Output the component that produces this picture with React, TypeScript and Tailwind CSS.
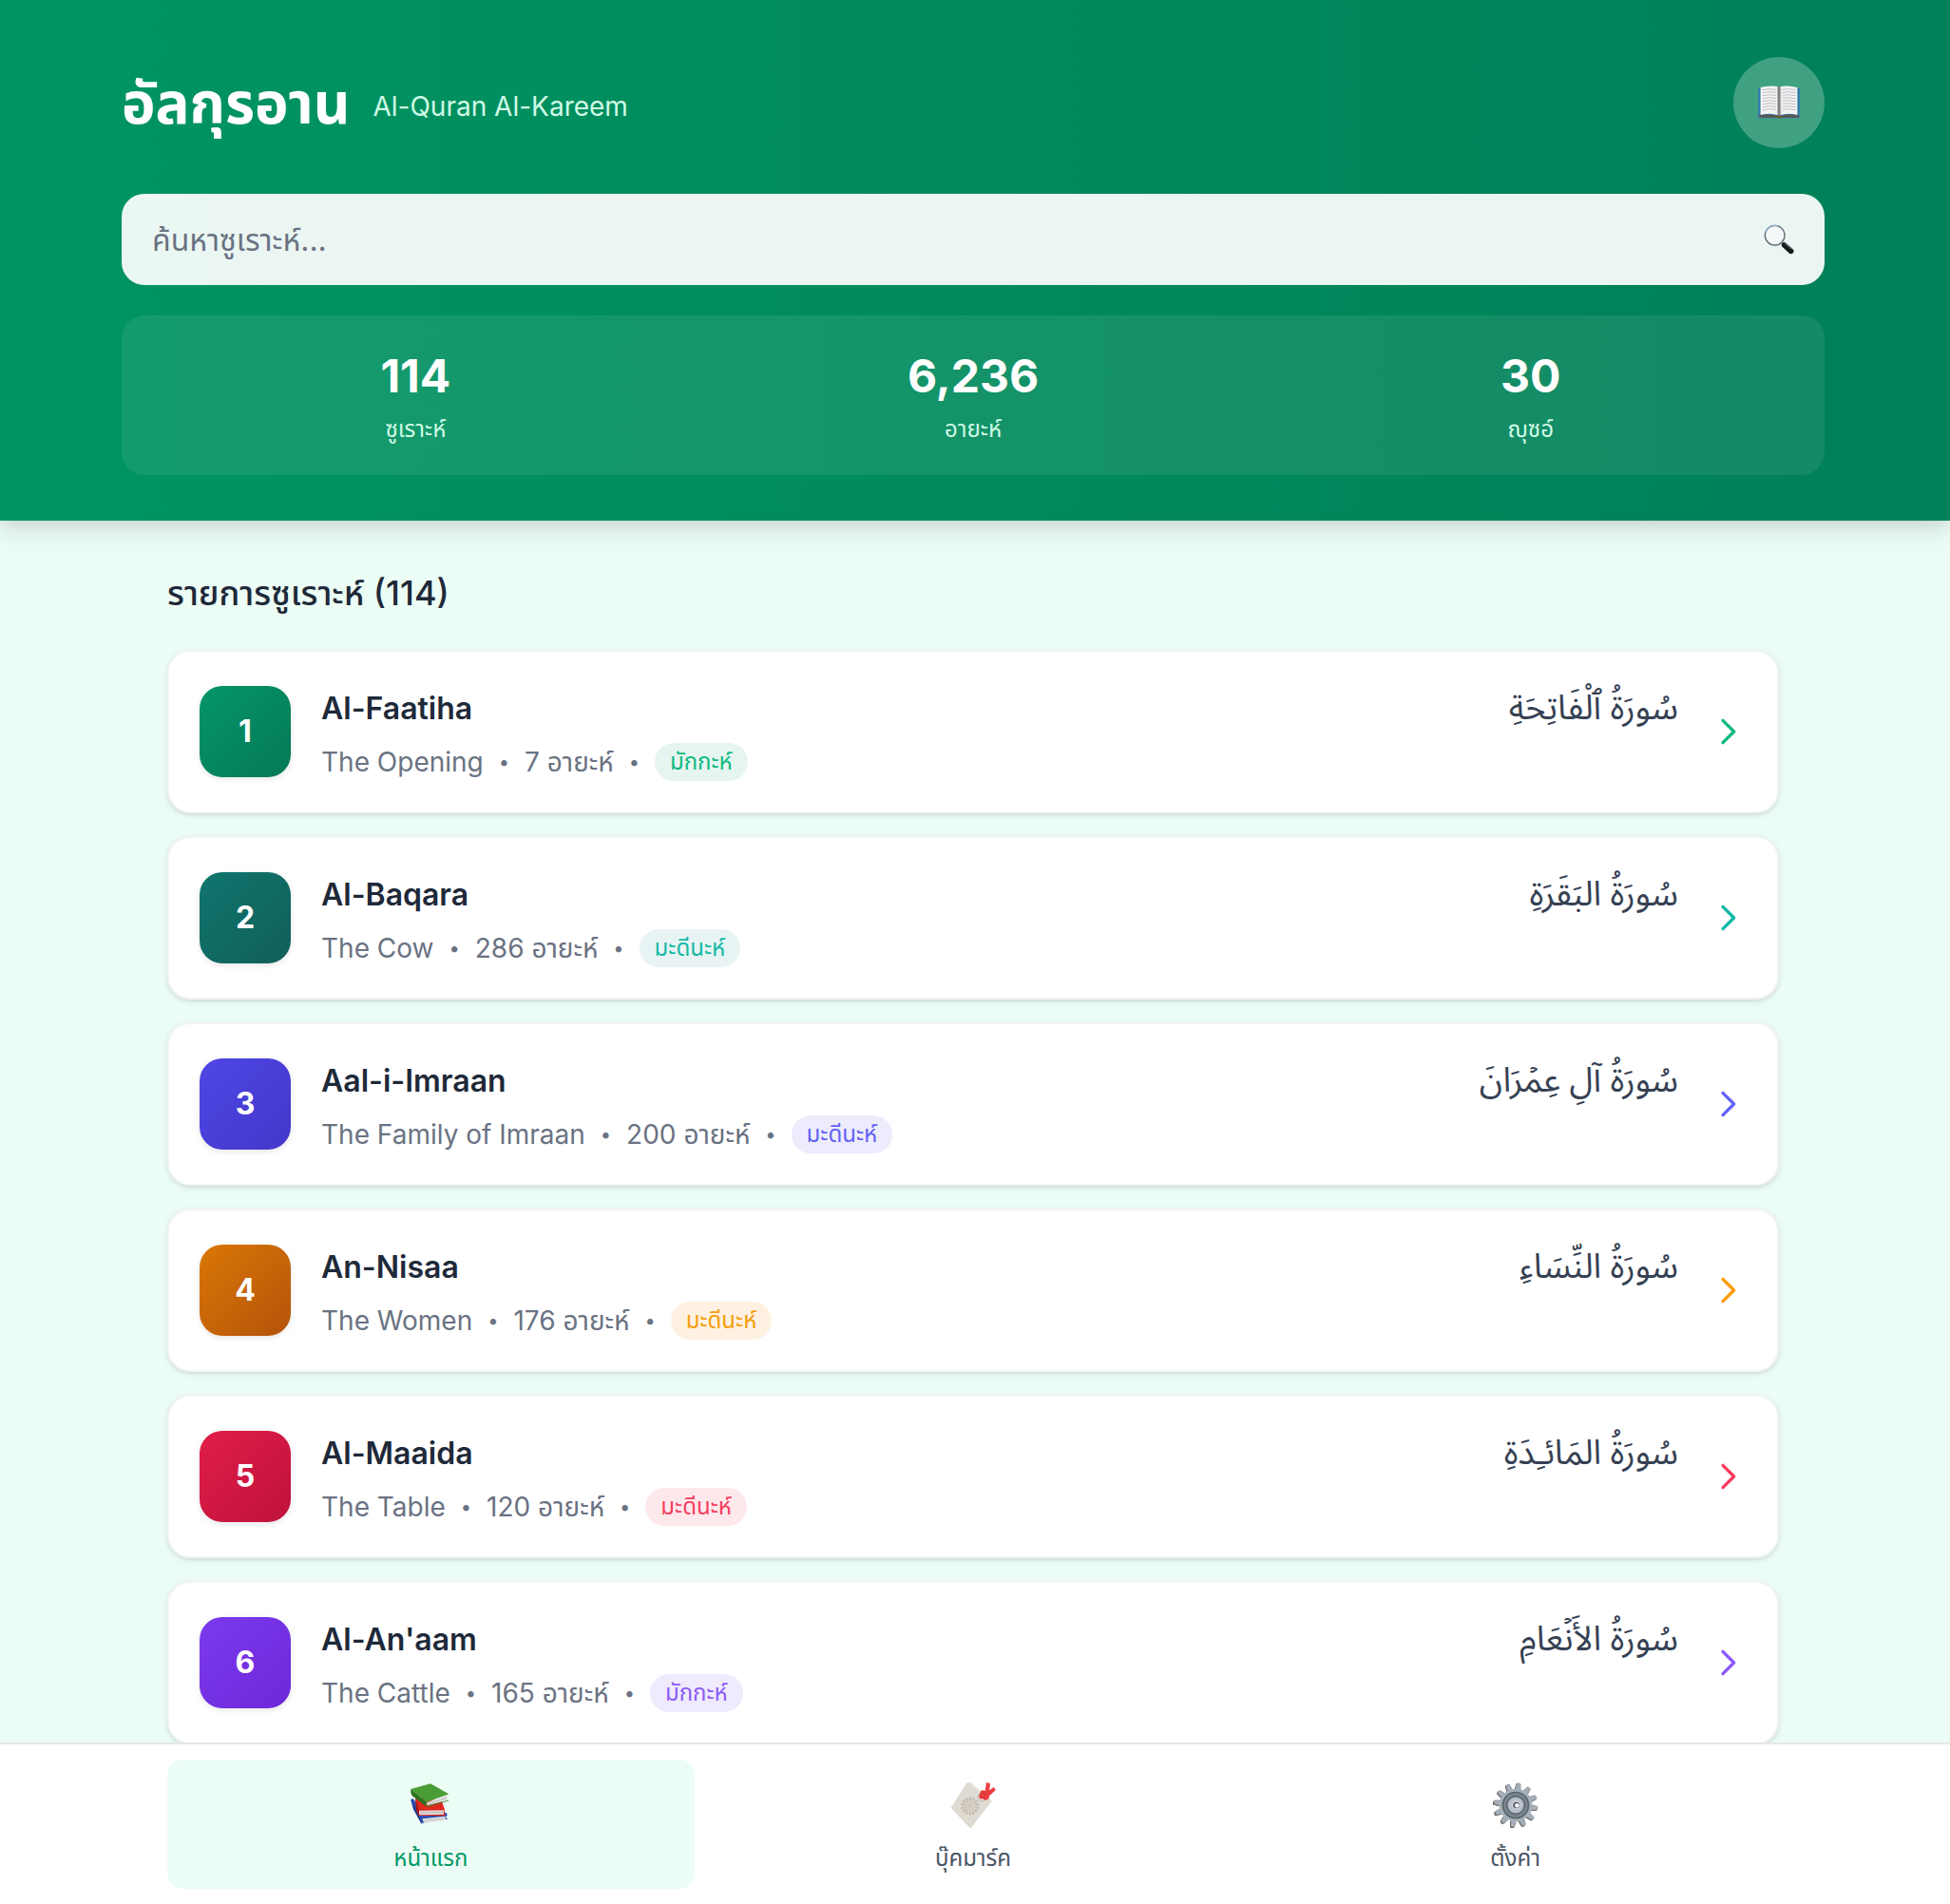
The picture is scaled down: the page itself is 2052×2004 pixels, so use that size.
import React from "react";

type Surah = {
  no: number;
  name: string;
  meaning: string;
  ayahs: number;
  place: string;
  arabic: string;
  tile: string;
  badge: string;
  arrow: string;
};

const MAKKI = "มักกะห์";
const MADANI = "มะดีนะห์";

const surahs: Surah[] = [
  { no: 1, name: "Al-Faatiha", meaning: "The Opening", ayahs: 7, place: MAKKI, arabic: "سُورَةُ ٱلْفَاتِحَةِ", tile: "from-[#059669] to-[#047857]", badge: "bg-[#e6f5f0] text-[#10b981]", arrow: "text-[#0fb981]" },
  { no: 2, name: "Al-Baqara", meaning: "The Cow", ayahs: 286, place: MADANI, arabic: "سُورَةُ البَقَرَةِ", tile: "from-[#0f766e] to-[#115e59]", badge: "bg-[#e7f4f3] text-[#14b8a6]", arrow: "text-[#0fb8a6]" },
  { no: 3, name: "Aal-i-Imraan", meaning: "The Family of Imraan", ayahs: 200, place: MADANI, arabic: "سُورَةُ آلِ عِمۡرَانَ", tile: "from-[#4f46e5] to-[#4338ca]", badge: "bg-[#edecfd] text-[#6361f4]", arrow: "text-[#6361fb]" },
  { no: 4, name: "An-Nisaa", meaning: "The Women", ayahs: 176, place: MADANI, arabic: "سُورَةُ النِّسَاءِ", tile: "from-[#d97706] to-[#b45309]", badge: "bg-[#fff1e1] text-[#f59e0b]", arrow: "text-[#fa9a05]" },
  { no: 5, name: "Al-Maaida", meaning: "The Table", ayahs: 120, place: MADANI, arabic: "سُورَةُ المَائـِدَةِ", tile: "from-[#e11d48] to-[#be123c]", badge: "bg-[#fde8ec] text-[#f43f5e]", arrow: "text-[#fb3a5e]" },
  { no: 6, name: "Al-An'aam", meaning: "The Cattle", ayahs: 165, place: MAKKI, arabic: "سُورَةُ الأَنۡعَامِ", tile: "from-[#7c3aed] to-[#6d28d9]", badge: "bg-[#f0eafd] text-[#8b5cf6]", arrow: "text-[#8a57fa]" },
];

const stats = [
  { value: "114", label: "ซูเราะห์" },
  { value: "6,236", label: "อายะห์" },
  { value: "30", label: "ญุซอ์" },
];

function BookIcon() {
  const lines = [114, 123, 132, 141, 150, 159, 168, 177];
  return (
    <svg viewBox="84 84 144 144" className="size-12" aria-hidden="true">
      <path d="M91 110h6v82h118v-82h6v95H91z" fill="#2f74b5" />
      <path d="M93 196q32-6 60 2h6q28-8 60-2v7H93z" fill="#5d564c" />
      <path d="M146 197h20l-3 8h-14z" fill="#6b5a22" />
      <path d="M98 108q30-8 56-2v90q-26-9-56-1z" fill="#f4f4f6" />
      <path d="M158 106q26-6 56 2v87q-30-8-56 1z" fill="#f4f4f6" />
      <path d="M150 105l6 2v90l-6-3zM158 107l5-2v89l-5 3z" fill="#b4b3b6" />
      <path d="M154 105h4v92h-4z" fill="#6a686b" />
      {lines.map((y) => (
        <g key={y} stroke="#b3b1b6" strokeWidth="2.5" fill="none">
          <path d={`M104 ${y + 2}q22-5 43-1`} />
          <path d={`M167 ${y + 1}q21-4 42 1`} />
        </g>
      ))}
    </svg>
  );
}

function SearchIcon() {
  return (
    <svg viewBox="108 540 96 96" className="size-8" aria-hidden="true">
      <circle cx="143" cy="575" r="31" fill="#f5f8f8" stroke="#5f6a73" strokeWidth="4" />
      <path d="M114 566a31 31 0 0 1 40-20" fill="none" stroke="#8fb0d4" strokeWidth="3.5" />
      <path d="M163 596l8 8" stroke="#7a7f84" strokeWidth="6" />
      <path d="M173 606l21 19" stroke="#16191c" strokeWidth="17" strokeLinecap="round" />
      <path d="M175 600l20 17" stroke="#5a6066" strokeWidth="4" strokeLinecap="round" />
    </svg>
  );
}

function BooksIcon() {
  return (
    <svg viewBox="28 33 144 144" className="size-12" aria-hidden="true">
      <path d="M37 88l8-4 22 30 84 16 2 7-5 4 6 8-78 12-8-5z" fill="#2a4fb4" />
      <path d="M74 148l72-8 2 7q-1 3 2 6l-68 9q-6-5-8-14z" fill="#e2e1e3" />
      <path d="M76 155l70-9" stroke="#a9a9b2" strokeWidth="2" />
      <path d="M38 90l8 28 24 44 5 3-20-46z" fill="#1f3b91" />
      <path d="M52 78l84 16 8 22 2 23-83-1-8-24z" fill="#e0281c" />
      <path d="M64 122l78-1v13l-76 2q-5-7-2-14z" fill="#dedcdc" />
      <path d="M66 129l76-2" stroke="#a7a2a2" strokeWidth="2" />
      <path d="M52 80l12 40-1 18-8-18z" fill="#a81912" />
      <path d="M38 54l62-17 58 33-70 25z" fill="#4a9d35" />
      <path d="M38 54l50 41-2 14-44-34q-6-10-4-21z" fill="#2d7420" />
      <path d="M90 96l66-24q-5 8-3 17l-63 17q-5-5 0-10z" fill="#e4e3e1" />
      <path d="M91 101l60-19" stroke="#a5a5a0" strokeWidth="2" />
      <path d="M86 109l4-2 66-18 2 2-66 19z" fill="#347f27" />
    </svg>
  );
}

function BookmarkIcon() {
  const rays = Array.from({ length: 14 }, (_, i) => (i * 360) / 14);
  return (
    <svg viewBox="30 33 144 144" className="size-12" aria-hidden="true">
      <path d="M89 29l71 60q2 3 0 5l-64 82q-2 2-5 0l-57-60q-3-3-1-5l52-81q2-3 4-1z" fill="#dfdad2" />
      <path d="M89 31l69 60" stroke="#ebe7e1" strokeWidth="4" />
      {rays.map((a) => (
        <path key={a} d="M92 100l-4-18q4-7 8 0z" fill="#c3bcb0" transform={`rotate(${a} 92 108)`} />
      ))}
      <circle cx="92" cy="108" r="9" fill="#cdc7bd" />
      <circle cx="129" cy="80" r="12" fill="#f5f3f0" stroke="#b9b3ab" strokeWidth="3" />
      <path d="M126 60q8-5 14 0l4-27 12 4-3 21 15-10 5 10-20 18q1 8-6 12l-8 1-6-4-9 1-4-9z" fill="#ee3f40" />
      <path d="M129 63l14 12M125 74l12 11" stroke="#b52b2e" strokeWidth="3" />
    </svg>
  );
}

function GearIcon() {
  const teeth = Array.from({ length: 12 }, (_, i) => i * 30 + 8);
  return (
    <svg viewBox="0 0 144 144" className="size-12" aria-hidden="true">
      <g fill="#5c5148">
        {teeth.map((a) => (
          <path key={a} d="M61 24l3-19q6-4 12 0l3 19z" transform={`rotate(${a} 70 74)`} />
        ))}
      </g>
      <g fill="#a5afb9" stroke="#78818a" strokeWidth="1.5">
        {teeth.map((a) => (
          <path key={a} d="M63 26l3-22q6-4 12 0l3 22z" transform={`rotate(${a} 72 72)`} />
        ))}
      </g>
      <circle cx="72" cy="72" r="52" fill="#a5afb9" />
      <circle cx="72" cy="72" r="43" fill="#59636b" />
      <circle cx="72" cy="72" r="38" fill="#7f8a93" />
      <circle cx="72" cy="72" r="32" fill="#66717a" />
      <circle cx="72" cy="72" r="25" fill="#b9c1ca" />
      <circle cx="73" cy="72" r="15" fill="#c9d0d8" />
      <circle cx="74" cy="72" r="10" fill="#4a5157" />
      <circle cx="76" cy="73" r="7" fill="#f4f5f6" />
    </svg>
  );
}

function Dot() {
  return <span className="text-[20px]">•</span>;
}

function SurahRow({ surah }: { surah: Surah }) {
  return (
    <li>
      <a
        href={`#surah-${surah.no}`}
        className="flex items-center rounded-3xl border-2 border-[#f3f4f6] bg-white p-8 shadow-[0_2px_6px_rgba(0,0,0,0.1),0_2px_4px_-2px_rgba(0,0,0,0.1)]"
      >
        <span
          className={`mr-8 flex size-24 shrink-0 items-center justify-center rounded-3xl bg-linear-to-br text-[32px] font-bold text-white shadow-[0_2px_6px_rgba(0,0,0,0.1)] ${surah.tile}`}
        >
          {surah.no}
        </span>
        <div className="min-w-0 flex-1">
          <div className="mb-2 flex items-center justify-between">
            <h3 className="text-[32px] leading-[56px] font-semibold text-[#1e2939]">{surah.name}</h3>
            <span
              lang="ar"
              dir="rtl"
              className="font-['Noto_Sans_Arabic','DejaVu_Sans',sans-serif] text-[36px] leading-[56px] text-[#364153]"
            >
              {surah.arabic}
            </span>
          </div>
          <div className="flex items-center gap-4 text-[28px] leading-10 text-[#6a7282]">
            <span>{surah.meaning}</span>
            <Dot />
            <span>{surah.ayahs} อายะห์</span>
            <Dot />
            <span className={`rounded-full px-4 py-1 text-[24px] leading-8 ${surah.badge}`}>{surah.place}</span>
          </div>
        </div>
        <svg viewBox="0 0 24 24" className={`ml-8 size-10 shrink-0 ${surah.arrow}`} fill="none" stroke="currentColor" aria-hidden="true">
          <path strokeLinecap="round" strokeLinejoin="round" strokeWidth="2" d="M9 5l7 7-7 7" />
        </svg>
      </a>
    </li>
  );
}

const tabs = [
  { label: "หน้าแรก", Icon: BooksIcon, active: true },
  { label: "บุ๊คมาร์ค", Icon: BookmarkIcon, active: false },
  { label: "ตั้งค่า", Icon: GearIcon, active: false },
];

export default function App() {
  return (
    <div className="flex h-screen flex-col bg-[#ecfdf5] font-['Inter','Noto_Sans_Thai',sans-serif]">
      <header className="relative z-10 shrink-0 bg-[linear-gradient(to_right,#009562,#007f58)] pt-[60px] pr-1 pb-12 shadow-[0_12px_24px_rgba(0,0,0,0.1),0_4px_12px_rgba(0,0,0,0.05)]">
        <div className="mx-auto max-w-[1792px]">
          <div className="mb-12 flex h-24 items-center justify-between">
            <div className="flex items-center gap-6">
              <h1 className="text-[60px] leading-[72px] font-bold text-white">อัลกุรอาน</h1>
              <p className="pt-2 text-[28px] leading-10 text-[#d0fae5]">Al-Quran Al-Kareem</p>
            </div>
            <button type="button" aria-label="Al-Quran" className="flex size-24 items-center justify-center rounded-full bg-white/25">
              <BookIcon />
            </button>
          </div>
          <div className="mb-8 flex h-24 items-center rounded-3xl bg-white/92 px-8">
            <input
              type="text"
              aria-label="ค้นหาซูเราะห์"
              placeholder="ค้นหาซูเราะห์..."
              className="h-full min-w-0 flex-1 bg-transparent text-[32px] text-[#1e2939] outline-none placeholder:text-[#6a7282]"
            />
            <button type="button" aria-label="ค้นหา">
              <SearchIcon />
            </button>
          </div>
          <dl className="grid grid-cols-3 gap-8 rounded-3xl bg-white/8 p-8 text-center">
            {stats.map((s) => (
              <div key={s.label} className="flex flex-col-reverse gap-2">
                <dt className="text-[24px] leading-8 text-[#d0fae5]">{s.label}</dt>
                <dd className="text-[48px] leading-[64px] font-bold text-white">{s.value}</dd>
              </div>
            ))}
          </dl>
        </div>
      </header>

      <main className="min-h-0 flex-1 overflow-y-auto pt-12 pr-1 [scrollbar-width:none]">
        <div className="mx-auto max-w-[1696px]">
          <h2 className="mb-8 text-[36px] leading-[56px] font-medium text-[#1e2939]">รายการซูเราะห์ (114)</h2>
          <ul className="flex flex-col gap-6">
            {surahs.map((s) => (
              <SurahRow key={s.no} surah={s} />
            ))}
          </ul>
        </div>
      </main>

      <nav className="relative z-10 shrink-0 border-t-2 border-[#e5e7eb] bg-white py-4 pr-1">
        <div className="mx-auto grid max-w-[1696px] grid-cols-3 gap-4">
          {tabs.map(({ label, Icon, active }) => (
            <button
              key={label}
              type="button"
              aria-current={active ? "page" : undefined}
              className={`flex flex-col items-center gap-2 rounded-2xl p-4 text-[24px] ${active ? "bg-[#ecfdf5] text-[#009966]" : "text-[#4a5565]"}`}
            >
              <span className="flex h-16 items-center">
                <Icon />
              </span>
              <span className="leading-8">{label}</span>
            </button>
          ))}
        </div>
      </nav>
    </div>
  );
}
